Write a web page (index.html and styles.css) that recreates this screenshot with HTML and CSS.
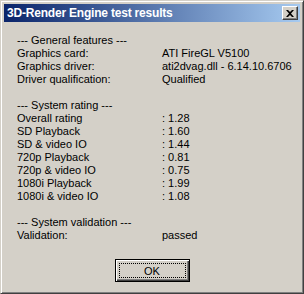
FILE: index.html
```html
<!DOCTYPE html>
<html lang="en">
<head>
    <meta charset="UTF-8">
    <title>3D-Render Engine test results</title>
    <link rel="stylesheet" href="styles.css">
</head>
<body>
    <div class="window">
        <div class="titlebar">
            <span class="title">3D-Render Engine test results</span>
            <button class="close" aria-label="Close">
                <svg width="8" height="7" viewBox="0 0 8 7">
                    <path d="M0 0h2l2 2 2-2h2L5 3.5 8 7H6L4 5 2 7H0l3-3.5z" fill="#000"/>
                </svg>
            </button>
        </div>

        <div class="content">
            <div class="results">
                <div class="full">--- General features ---</div>
                <div>Graphics card:</div><div>ATI FireGL V5100</div>
                <div>Graphics driver:</div><div>ati2dvag.dll - 6.14.10.6706</div>
                <div>Driver qualification:</div><div>Qualified</div>
                <div class="full blank"></div>

                <div class="full">--- System rating ---</div>
                <div>Overall rating</div><div>: 1.28</div>
                <div>SD Playback</div><div>: 1.60</div>
                <div>SD &amp; video IO</div><div>: 1.44</div>
                <div>720p Playback</div><div>: 0.81</div>
                <div>720p &amp; video IO</div><div>: 0.75</div>
                <div>1080i Playback</div><div>: 1.99</div>
                <div>1080i &amp; video IO</div><div>: 1.08</div>
                <div class="full blank"></div>

                <div class="full">--- System validation ---</div>
                <div>Validation:</div><div>passed</div>
            </div>

            <div class="actions">
                <button class="ok"><span class="focus">OK</span></button>
            </div>
        </div>
    </div>
</body>
</html>
```

FILE: styles.css
```css
/* Page */
body {
    margin: 0;
    padding: 0;
    background: #d4d0c8;
    font-family: 'Liberation Sans', Arial, sans-serif;
    font-size: 11px;
    color: #000;
}

/* Classic window frame */
.window {
    box-sizing: border-box;
    width: 304px;
    height: 294px;
    background: #d4d0c8;
    border: 1px solid;
    border-color: #d4d0c8 #404040 #404040 #d4d0c8;
    box-shadow: inset 1px 1px 0 #fff, inset -1px -1px 0 #808080;
    padding: 3px;
    display: flex;
    flex-direction: column;
}

/* Title bar */
.titlebar {
    height: 18px;
    display: flex;
    align-items: center;
    justify-content: space-between;
    padding: 0 2px 0 3px;
    background: linear-gradient(90deg, #0a246a, #a6caf0);
}

.title {
    color: #fff;
    font-weight: bold;
    font-size: 12px;
    letter-spacing: -0.2px;
}

.close {
    box-sizing: border-box;
    width: 16px;
    height: 14px;
    padding: 0;
    display: flex;
    align-items: center;
    justify-content: center;
    background: #d4d0c8;
    border: 1px solid;
    border-color: #fff #404040 #404040 #fff;
    box-shadow: inset -1px -1px 0 #808080;
}

/* Dialog content */
.content {
    flex: 1;
    display: flex;
    flex-direction: column;
    padding: 12px 0 0 13px;
}

.results {
    display: grid;
    grid-template-columns: 145px auto;
    line-height: 13px;
}

.results .full {
    grid-column: 1 / 3;
}

.results .blank {
    height: 13px;
}

/* Buttons row */
.actions {
    display: flex;
    justify-content: center;
    margin-top: 17px;
    padding-right: 13px;
}

.ok {
    box-sizing: border-box;
    width: 75px;
    height: 23px;
    padding: 3px;
    background: #d4d0c8;
    border: 1px solid #000;
    box-shadow: inset 1px 1px 0 #fff, inset -1px -1px 0 #404040, inset -2px -2px 0 #808080;
    font-family: inherit;
    font-size: 11px;
    color: #000;
}

.ok .focus {
    display: flex;
    height: 100%;
    align-items: center;
    justify-content: center;
    border: 1px dotted #000;
    box-sizing: border-box;
}
```
